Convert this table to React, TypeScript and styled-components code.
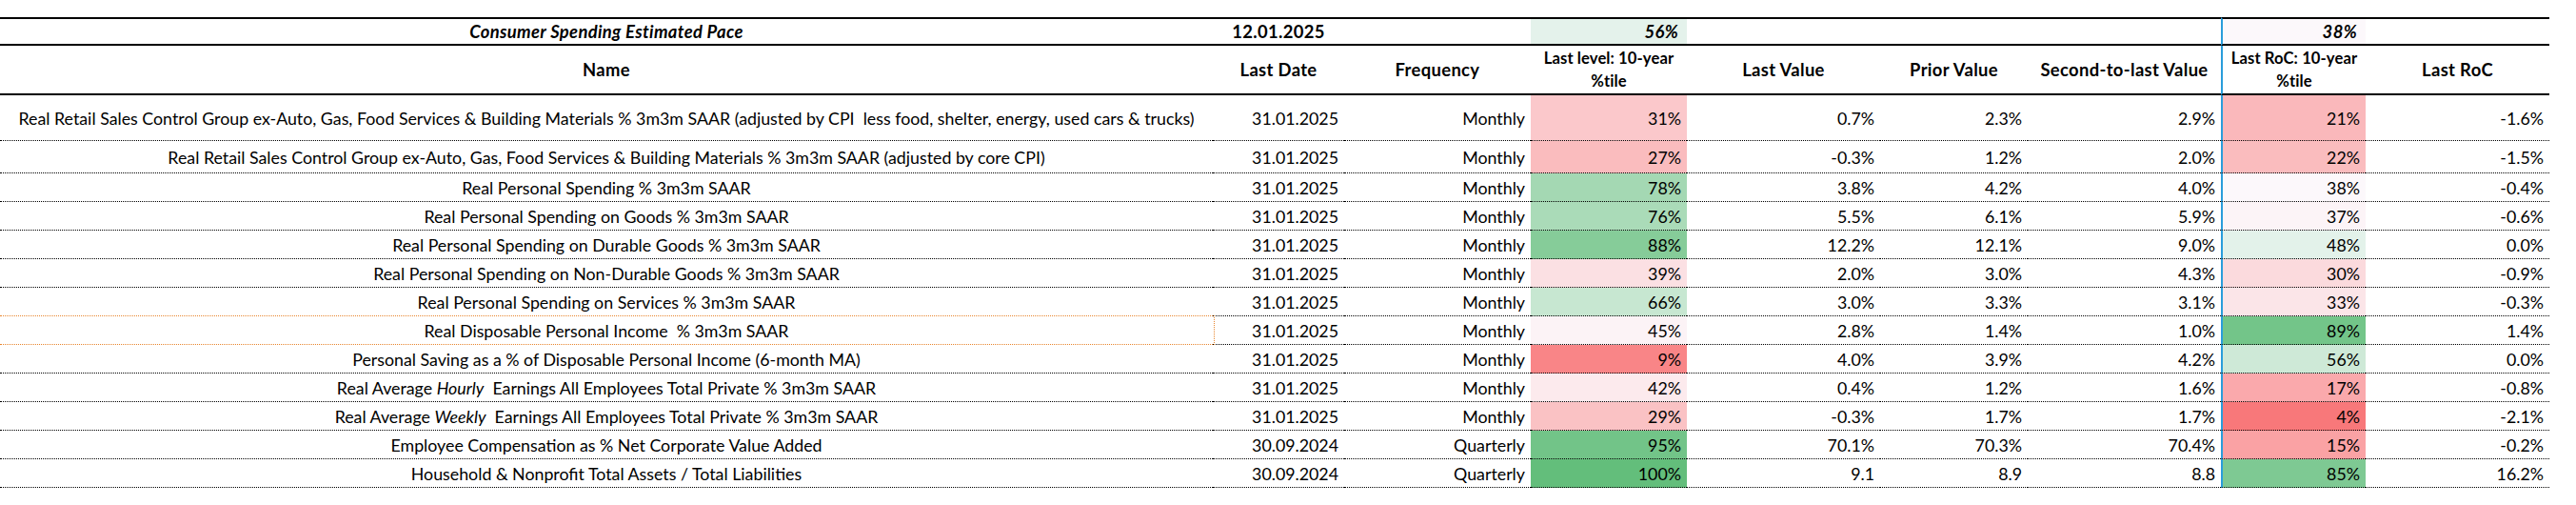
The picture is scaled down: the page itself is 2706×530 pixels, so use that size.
import React from 'react';
import styled, { createGlobalStyle } from 'styled-components';

const GlobalStyle = createGlobalStyle`
  html, body { margin: 0; padding: 0; background: #ffffff; }
  body { font-family: Lato, "Open Sans", "Liberation Sans", sans-serif; color: #000; }
`;

const COLS = '1274px 138px 196px 164px 203px 155px 203px 152px 193px';

type Align = 'left' | 'center' | 'right';
type Rule = 'thick' | 'dotted';

const Page = styled.div`
  padding-top: 18px;
`;

const Sheet = styled.div`
  width: 2678px;
  display: flex;
  flex-direction: column;
`;

const Row = styled.div<{ $h: number }>`
  display: grid;
  grid-template-columns: ${COLS};
  height: ${p => p.$h}px;
`;

const Cell = styled.div<{
  $align?: Align;
  $rule?: Rule;
  $top?: boolean;
  $blue?: boolean;
  $bold?: boolean;
  $italic?: boolean;
  $pad?: number;
}>`
  box-sizing: border-box;
  position: relative;
  display: flex;
  align-items: center;
  justify-content: ${p => (p.$align === 'left' ? 'flex-start' : p.$align === 'center' ? 'center' : 'flex-end')};
  padding: 0 ${p => p.$pad ?? 6}px;
  font-size: ${p => (p.$bold ? '18.4px' : '17.8px')};
  letter-spacing: ${p => (p.$bold ? '0.35px' : '0')};
  line-height: 20px;
  white-space: pre;
  font-weight: ${p => (p.$bold ? 700 : 400)};
  font-style: ${p => (p.$italic ? 'italic' : 'normal')};
  border-top: ${p => (p.$top ? '2px solid #000' : 'none')};
  border-bottom: ${p => (p.$rule === 'thick' ? '2px solid #000' : '1px dotted #000')};
  border-left: ${p => (p.$blue ? '2px solid #2a9ddb' : 'none')};
`;

const HeaderCell = styled(Cell)<{ $wrapped?: boolean }>`
  text-align: center;
  line-height: 24px;
  white-space: nowrap;
  padding: 0 2px;
  ${p => (p.$wrapped ? 'font-size: 16.6px; letter-spacing: 0.1px;' : '')}
`;

const NameCell = styled(Cell)<{ $selected?: boolean }>`
  ${p =>
    p.$selected
      ? `
    &::after {
      content: '';
      position: absolute;
      top: -1px;
      left: 0;
      right: -2px;
      bottom: -1px;
      border: 1px dotted #e8862e;
      border-left: none;
      pointer-events: none;
      z-index: 1;
    }
  `
      : ''}
`;

const Em = styled.span`
  font-style: italic;
`;

const RED = [248, 105, 107];
const WHITE = [252, 252, 255];
const GREEN = [99, 190, 123];

function mix(a: number[], b: number[], t: number) {
  const c = a.map((v, i) => Math.round(v + (b[i] - v) * t));
  return `rgb(${c[0]}, ${c[1]}, ${c[2]})`;
}

function heat(v: number, mid: number, max: number) {
  if (v <= mid) return mix(RED, WHITE, Math.max(0, v / mid));
  return mix(WHITE, GREEN, Math.min(1, (v - mid) / (max - mid)));
}

const lvlHeat = (v: number) => heat(v, 48, 100);
const rocHeat = (v: number) => heat(v, 39, 95);

type DataRow = {
  name: React.ReactNode;
  date: string;
  freq: string;
  lvl: number;
  last: string;
  prior: string;
  second: string;
  roc: number;
  lastRoc: string;
  h: number;
  selected?: boolean;
};

const rows: DataRow[] = [
  {
    name: 'Real Retail Sales Control Group ex-Auto, Gas, Food Services & Building Materials % 3m3m SAAR (adjusted by CPI  less food, shelter, energy, used cars & trucks)',
    date: '31.01.2025', freq: 'Monthly', lvl: 31, last: '0.7%', prior: '2.3%', second: '2.9%', roc: 21, lastRoc: '-1.6%', h: 48,
  },
  {
    name: 'Real Retail Sales Control Group ex-Auto, Gas, Food Services & Building Materials % 3m3m SAAR (adjusted by core CPI)',
    date: '31.01.2025', freq: 'Monthly', lvl: 27, last: '-0.3%', prior: '1.2%', second: '2.0%', roc: 22, lastRoc: '-1.5%', h: 34,
  },
  { name: 'Real Personal Spending % 3m3m SAAR', date: '31.01.2025', freq: 'Monthly', lvl: 78, last: '3.8%', prior: '4.2%', second: '4.0%', roc: 38, lastRoc: '-0.4%', h: 30 },
  { name: 'Real Personal Spending on Goods % 3m3m SAAR', date: '31.01.2025', freq: 'Monthly', lvl: 76, last: '5.5%', prior: '6.1%', second: '5.9%', roc: 37, lastRoc: '-0.6%', h: 30 },
  { name: 'Real Personal Spending on Durable Goods % 3m3m SAAR', date: '31.01.2025', freq: 'Monthly', lvl: 88, last: '12.2%', prior: '12.1%', second: '9.0%', roc: 48, lastRoc: '0.0%', h: 30 },
  { name: 'Real Personal Spending on Non-Durable Goods % 3m3m SAAR', date: '31.01.2025', freq: 'Monthly', lvl: 39, last: '2.0%', prior: '3.0%', second: '4.3%', roc: 30, lastRoc: '-0.9%', h: 30 },
  { name: 'Real Personal Spending on Services % 3m3m SAAR', date: '31.01.2025', freq: 'Monthly', lvl: 66, last: '3.0%', prior: '3.3%', second: '3.1%', roc: 33, lastRoc: '-0.3%', h: 30 },
  { name: 'Real Disposable Personal Income  % 3m3m SAAR', date: '31.01.2025', freq: 'Monthly', lvl: 45, last: '2.8%', prior: '1.4%', second: '1.0%', roc: 89, lastRoc: '1.4%', h: 30, selected: true },
  { name: 'Personal Saving as a % of Disposable Personal Income (6-month MA)', date: '31.01.2025', freq: 'Monthly', lvl: 9, last: '4.0%', prior: '3.9%', second: '4.2%', roc: 56, lastRoc: '0.0%', h: 30 },
  {
    name: (
      <>
        {'Real Average '}
        <Em>Hourly</Em>
        {'  Earnings All Employees Total Private % 3m3m SAAR'}
      </>
    ),
    date: '31.01.2025', freq: 'Monthly', lvl: 42, last: '0.4%', prior: '1.2%', second: '1.6%', roc: 17, lastRoc: '-0.8%', h: 30,
  },
  {
    name: (
      <>
        {'Real Average '}
        <Em>Weekly</Em>
        {'  Earnings All Employees Total Private % 3m3m SAAR'}
      </>
    ),
    date: '31.01.2025', freq: 'Monthly', lvl: 29, last: '-0.3%', prior: '1.7%', second: '1.7%', roc: 4, lastRoc: '-2.1%', h: 30,
  },
  { name: 'Employee Compensation as % Net Corporate Value Added', date: '30.09.2024', freq: 'Quarterly', lvl: 95, last: '70.1%', prior: '70.3%', second: '70.4%', roc: 15, lastRoc: '-0.2%', h: 30 },
  { name: 'Household & Nonprofit Total Assets / Total Liabilities', date: '30.09.2024', freq: 'Quarterly', lvl: 100, last: '9.1', prior: '8.9', second: '8.8', roc: 85, lastRoc: '16.2%', h: 30 },
];

export default function App() {
  return (
    <>
      <GlobalStyle />
      <Page>
        <Sheet>
          <Row $h={30}>
            <Cell $align="center" $top $rule="thick" $bold $italic>Consumer Spending Estimated Pace</Cell>
            <Cell $align="center" $top $rule="thick" $bold>12.01.2025</Cell>
            <Cell $top $rule="thick" />
            <Cell $top $rule="thick" $bold $italic $pad={9} style={{ background: lvlHeat(56) }}>56%</Cell>
            <Cell $top $rule="thick" />
            <Cell $top $rule="thick" />
            <Cell $top $rule="thick" />
            <Cell $top $rule="thick" $blue $bold $italic $pad={9} style={{ background: rocHeat(38) }}>38%</Cell>
            <Cell $top $rule="thick" />
          </Row>
          <Row $h={52}>
            <HeaderCell $align="center" $rule="thick" $bold>Name</HeaderCell>
            <HeaderCell $align="center" $rule="thick" $bold>Last Date</HeaderCell>
            <HeaderCell $align="center" $rule="thick" $bold>Frequency</HeaderCell>
            <HeaderCell $align="center" $rule="thick" $bold $wrapped>Last level: 10-year<br />%tile</HeaderCell>
            <HeaderCell $align="center" $rule="thick" $bold>Last Value</HeaderCell>
            <HeaderCell $align="center" $rule="thick" $bold>Prior Value</HeaderCell>
            <HeaderCell $align="center" $rule="thick" $bold>Second-to-last Value</HeaderCell>
            <HeaderCell $align="center" $rule="thick" $bold $blue $wrapped>Last RoC: 10-year<br />%tile</HeaderCell>
            <HeaderCell $align="center" $rule="thick" $bold>Last RoC</HeaderCell>
          </Row>
          {rows.map((r, i) => (
            <Row key={i} $h={r.h}>
              <NameCell $align="center" $selected={r.selected}>{r.name}</NameCell>
              <Cell>{r.date}</Cell>
              <Cell>{r.freq}</Cell>
              <Cell style={{ background: lvlHeat(r.lvl) }}>{r.lvl}%</Cell>
              <Cell>{r.last}</Cell>
              <Cell>{r.prior}</Cell>
              <Cell>{r.second}</Cell>
              <Cell $blue style={{ background: rocHeat(r.roc) }}>{r.roc}%</Cell>
              <Cell>{r.lastRoc}</Cell>
            </Row>
          ))}
        </Sheet>
      </Page>
    </>
  );
}
